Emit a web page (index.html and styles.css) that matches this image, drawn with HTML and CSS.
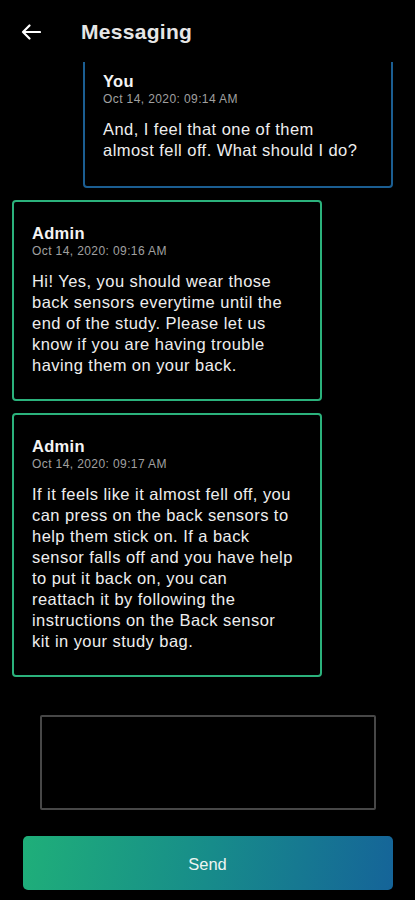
FILE: index.html
```html
<!DOCTYPE html>
<html lang="en">
<head>
  <meta charset="UTF-8">
  <meta name="viewport" content="width=device-width, initial-scale=1.0">
  <title>Messaging</title>
  <link rel="stylesheet" href="styles.css">
</head>
<body>

  <div class="header">
    <button class="back" aria-label="Back">
      <svg width="20" height="16" viewBox="0 0 20 16">
        <path d="M19 8H2M8.5 1.5L2 8l6.5 6.5" fill="none" stroke="#ffffff" stroke-width="2.2" stroke-linecap="round" stroke-linejoin="round"/>
      </svg>
    </button>
    <h1 class="title">Messaging</h1>
  </div>

  <div class="messages">
    <div class="msg msg-you">
      <div class="name">You</div>
      <div class="date">Oct 14, 2020: 09:14 AM</div>
      <p class="text">And, I feel that one of them almost fell off. What should I do?</p>
    </div>

    <div class="msg msg-admin">
      <div class="name">Admin</div>
      <div class="date">Oct 14, 2020: 09:16 AM</div>
      <p class="text">Hi! Yes, you should wear those back sensors everytime until the end of the study. Please let us know if you are having trouble having them on your back.</p>
    </div>

    <div class="msg msg-admin">
      <div class="name">Admin</div>
      <div class="date">Oct 14, 2020: 09:17 AM</div>
      <p class="text">If it feels like it almost fell off, you can press on the back sensors to help them stick on. If a back sensor falls off and you have help to put it back on, you can reattach it by following the instructions on the Back sensor kit in your study bag.</p>
    </div>
  </div>

  <div class="compose">
    <textarea class="input"></textarea>
    <button class="send">Send</button>
  </div>

</body>
</html>
```

FILE: styles.css
```css
body {
  margin: 0;
  background-color: #000000;
  font-family: "Liberation Sans", Arial, sans-serif;
  color: #f0f0f0;
  width: 415px;
  height: 900px;
  overflow: hidden;
}
.header {
  height: 62px;
  display: flex;
  align-items: center;
  padding-left: 21px;
  padding-top: 2px;
  box-sizing: border-box;
}
.back {
  background: none;
  border: none;
  padding: 0;
  width: 20px;
  height: 16px;
  display: flex;
  cursor: pointer;
}
.title {
  margin: 0 0 0 40px;
  font-size: 21px;
  font-weight: bold;
  letter-spacing: 0.3px;
  color: #e6e6e6;
}
.messages {
  height: 615px;
  display: flex;
  flex-direction: column;
  justify-content: flex-end;
  gap: 12px;
  overflow: hidden;
  padding: 0 22px 0 12px;
}
.msg {
  flex-shrink: 0;
  width: 310px;
  box-sizing: border-box;
  border: 2px solid #2bb27c;
  border-radius: 4px;
  padding: 21px 26px 23px 18px;
}
.msg-you {
  align-self: flex-end;
  border-color: #1b5e92;
  padding-bottom: 25px;
}
.msg-admin {
  align-self: flex-start;
}
.name {
  font-size: 16.5px;
  font-weight: bold;
  letter-spacing: 0.3px;
  line-height: 20px;
  color: #f4f4f4;
}
.date {
  font-size: 12px;
  letter-spacing: 0.4px;
  color: #a0a0a0;
  line-height: 14px;
  margin-top: 1px;
}
.text {
  margin: 13px 0 0 0;
  font-size: 16.5px;
  letter-spacing: 0.45px;
  line-height: 21px;
  color: #eeeeee;
}
.compose {
  display: flex;
  flex-direction: column;
  align-items: center;
}
.input {
  margin-top: 38px;
  width: 336px;
  height: 95px;
  box-sizing: border-box;
  background-color: #000000;
  border: 2px solid #474747;
  border-radius: 2px;
  resize: none;
  color: #ffffff;
  font-family: "Liberation Sans", Arial, sans-serif;
}
.send {
  margin-top: 26px;
  width: 370px;
  height: 54px;
  border: none;
  border-radius: 5px;
  background: linear-gradient(100deg, #1faf79 0%, #178c8a 50%, #156499 100%);
  color: #eef5f2;
  font-family: "Liberation Sans", Arial, sans-serif;
  font-size: 16.5px;
  padding-top: 3px;
  cursor: pointer;
}
```
